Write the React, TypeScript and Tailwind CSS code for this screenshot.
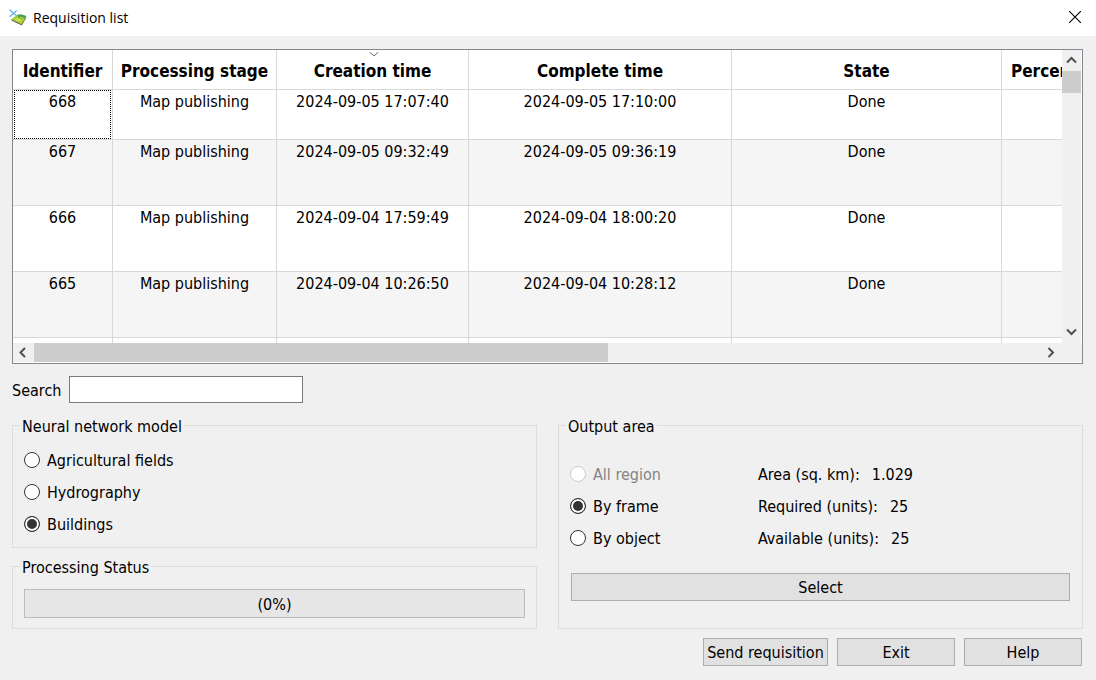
import { useState } from "react";

const columns = [
  { title: "Identifier", width: "w-[100px]" },
  { title: "Processing stage", width: "w-[164px]" },
  { title: "Creation time", width: "w-[192px]", sorted: true },
  { title: "Complete time", width: "w-[263px]" },
  { title: "State", width: "w-[270px]" },
];

const requisitions = [
  { id: "668", stage: "Map publishing", created: "2024-09-05 17:07:40", completed: "2024-09-05 17:10:00", state: "Done" },
  { id: "667", stage: "Map publishing", created: "2024-09-05 09:32:49", completed: "2024-09-05 09:36:19", state: "Done" },
  { id: "666", stage: "Map publishing", created: "2024-09-04 17:59:49", completed: "2024-09-04 18:00:20", state: "Done" },
  { id: "665", stage: "Map publishing", created: "2024-09-04 10:26:50", completed: "2024-09-04 10:28:12", state: "Done" },
];

const models = ["Agricultural fields", "Hydrography", "Buildings"];

const areas = [
  { name: "All region", disabled: true },
  { name: "By frame" },
  { name: "By object" },
];

const info = [
  { label: "Area (sq. km):", value: "1.029" },
  { label: "Required (units):", value: "25" },
  { label: "Available (units):", value: "25" },
];

function AppIcon() {
  return (
    <svg width="18" height="18" viewBox="0 0 18 18" aria-hidden="true">
      <path d="M2.5 10 12.5 14.8 17.2 7.4 17.2 9 12.8 16.6 2.5 11.6z" fill="#6b6a3a" />
      <path d="M2.5 10.2 8.6 5.6 17.2 7 12.6 15.2z" fill="#a4cc2a" />
      <path d="M8.2 5.9 12 5.2 17.2 7 15.8 9.4 12.4 7.6 9.6 8.2z" fill="#3fa05a" />
      <path d="M5 10.4 9 8.4 13 10.2 11.4 13z" fill="#c9e25c" />
      <path d="M8.8 8.4 13 10.2" stroke="#6fa31c" strokeWidth=".8" />
      <path d="M.8 1 3.4 3.4M7.8 1.4 5.4 3.6M1 7.6 3.4 5.2M5.6 5.2 7.6 6.6" stroke="#5aa7e6" strokeWidth="1.1" />
      <path d="M3 3 6.2 5.8M6 3 3 5.8" stroke="#6db4ee" strokeWidth="1.5" />
      <path d="M0 1.6 1.8.2M6.8.8 8.6 2.2M0 6.8 1.8 8.4" stroke="#a8d4f7" strokeWidth="1" />
    </svg>
  );
}

function Chevron({ dir }: { dir: "up" | "down" | "left" | "right" }) {
  const paths = {
    up: "M1 7.5 5.5 3 10 7.5",
    down: "M1 2.5 5.5 7 10 2.5",
    left: "M7 1 2.5 5.5 7 10",
    right: "M2.5 1 7 5.5 2.5 10",
  };
  return (
    <svg width="11" height="11" viewBox="0 0 11 11" fill="none" stroke="#505050" strokeWidth="2" aria-hidden="true">
      <path d={paths[dir]} />
    </svg>
  );
}

function Radio({ name, label, checked, disabled, onChange }: {
  name: string;
  label: string;
  checked: boolean;
  disabled?: boolean;
  onChange: () => void;
}) {
  return (
    <label className={`flex h-8 items-center gap-[7px] ${disabled ? "text-[#848484]" : ""}`}>
      <input
        type="radio"
        name={name}
        checked={checked}
        disabled={disabled}
        onChange={onChange}
        className="size-4 shrink-0 appearance-none rounded-full border border-[#333333] bg-white checked:bg-[#333333] checked:shadow-[inset_0_0_0_2px_#ffffff] disabled:border-[#cccccc]"
      />
      <span className="pt-0.5">{label}</span>
    </label>
  );
}

const buttonClass = "h-7 border border-[#adadad] bg-[#e1e1e1] pt-0.5 text-center leading-5 hover:border-[#0078d7] hover:bg-[#e5f1fb]";
const cellClass = "relative border-r border-b border-[#d8d8d8] p-0 pt-0.5 text-center align-top";
const groupClass = "border border-[#dcdcdc] px-[11px]";
const legendClass = "-ml-1 px-0.5 pt-[3px]";

export default function App() {
  const [search, setSearch] = useState("");
  const [model, setModel] = useState("Buildings");
  const [area, setArea] = useState("By frame");

  return (
    <div className="flex min-h-screen flex-col bg-[#f0f0f0] font-['DejaVu_Sans_Condensed','Noto_Sans',sans-serif] text-[16px] leading-5 text-black">
      <header className="flex h-9 items-center bg-white pl-[9px]">
        <AppIcon />
        <h1 className="ml-1.5 flex-1 font-['Open_Sans',sans-serif] text-[14px]">Requisition list</h1>
        <button type="button" aria-label="Close" className="flex h-[34px] w-[42px] items-center justify-center self-start">
          <svg width="12" height="12" viewBox="0 0 12 12" stroke="#000000" strokeWidth="1.1" aria-hidden="true">
            <path d="M0 0 12 12M12 0 0 12" />
          </svg>
        </button>
      </header>

      <main className="flex flex-col pt-[13px] pr-[13px] pl-3">
        <div className="border border-[#828790] bg-white">
          <div className="flex h-[293px]">
            <div className="min-w-0 flex-1 overflow-hidden">
              <table className="w-[1838px] table-fixed border-separate border-spacing-0">
                <thead>
                  <tr className="h-10 text-[17px]">
                    {columns.map((c) => (
                      <th key={c.title} className={`relative border-r border-b border-[#d8d8d8] p-0 pt-0.5 font-bold ${c.width}`}>
                        {c.sorted && (
                          <svg className="absolute top-0.5 left-1/2 -ml-1" width="10" height="5" viewBox="0 0 10 5" fill="none" stroke="#707070" aria-hidden="true">
                            <path d="M.5 0 5 4 9.5 0" />
                          </svg>
                        )}
                        {c.title}
                      </th>
                    ))}
                    <th className="border-b border-[#d8d8d8] p-0 pt-0.5 pl-[9px] text-left font-bold">Percent</th>
                  </tr>
                </thead>
                <tbody>
                  {requisitions.map((r, i) => (
                    <tr key={r.id} className={`${i === 0 ? "h-[50px]" : "h-[66px]"} ${i % 2 ? "bg-[#f5f5f5]" : "bg-white"}`}>
                      <td className={cellClass}>
                        {i === 0 && <span className="absolute inset-x-px inset-y-0 border border-dotted border-black" />}
                        {r.id}
                      </td>
                      <td className={cellClass}>{r.stage}</td>
                      <td className={cellClass}>{r.created}</td>
                      <td className={cellClass}>{r.completed}</td>
                      <td className={cellClass}>{r.state}</td>
                      <td className="border-b border-[#d8d8d8]"></td>
                    </tr>
                  ))}
                  <tr className="h-[66px]">
                    {columns.map((c) => (
                      <td key={c.title} className={cellClass}></td>
                    ))}
                    <td></td>
                  </tr>
                </tbody>
              </table>
            </div>
            <div className="mr-px flex w-[19px] flex-col bg-[#f0f0f0]">
              <button type="button" aria-label="Scroll up" className="flex h-[21px] items-center justify-center">
                <Chevron dir="up" />
              </button>
              <div className="h-[22px] bg-[#cdcdcd]" />
              <div className="flex-1" />
              <button type="button" aria-label="Scroll down" className="flex h-[21px] items-center justify-center">
                <Chevron dir="down" />
              </button>
            </div>
          </div>
          <div className="mb-px flex h-[19px] bg-[#f0f0f0]">
            <button type="button" aria-label="Scroll left" className="flex w-[21px] items-center justify-center">
              <Chevron dir="left" />
            </button>
            <div className="flex-1">
              <div className="h-full w-[57%] bg-[#cdcdcd]" />
            </div>
            <button type="button" aria-label="Scroll right" className="mr-5 flex w-[21px] items-center justify-center">
              <Chevron dir="right" />
            </button>
          </div>
        </div>

        <div className="mt-3 flex items-center gap-2">
          <label htmlFor="search" className="pt-0.5">Search</label>
          <input
            id="search"
            type="text"
            value={search}
            onChange={(e) => setSearch(e.target.value)}
            className="h-[27px] w-[234px] border border-[#7a7a7a] bg-white px-1 outline-none focus:border-[#0078d7]"
          />
        </div>

        <div className="mt-[11px] grid grid-cols-2 gap-[21px]">
          <div className="flex flex-col gap-[7px]">
            <fieldset className={`pb-[7px] ${groupClass}`}>
              <legend className={legendClass}>Neural network model</legend>
              <div className="pt-[7px]">
                {models.map((m) => (
                  <Radio key={m} name="model" label={m} checked={model === m} onChange={() => setModel(m)} />
                ))}
              </div>
            </fieldset>

            <fieldset className={`pb-2.5 ${groupClass}`}>
              <legend className={legendClass}>Processing Status</legend>
              <div
                role="progressbar"
                aria-label="Processing Status"
                aria-valuenow={0}
                className="mt-[11px] flex h-[29px] items-center justify-center border border-[#bcbcbc] bg-[#e6e6e6] pt-0.5"
              >
                (0%)
              </div>
            </fieldset>
          </div>

          <fieldset className={groupClass}>
            <legend className={legendClass}>Output area</legend>
            <div className="grid grid-cols-[3fr_5fr] pt-[21px]">
              <div>
                {areas.map((a) => (
                  <Radio
                    key={a.name}
                    name="area"
                    label={a.name}
                    disabled={a.disabled}
                    checked={area === a.name}
                    onChange={() => setArea(a.name)}
                  />
                ))}
              </div>
              <div>
                {info.map((row) => (
                  <p key={row.label} className="flex h-8 items-center gap-3 pt-0.5">
                    <span>{row.label}</span>
                    <span>{row.value}</span>
                  </p>
                ))}
              </div>
            </div>
            <div className="mt-[19px] px-px">
              <button type="button" className={`w-full ${buttonClass}`}>Select</button>
            </div>
          </fieldset>
        </div>

        <div className="mt-[9px] flex justify-end gap-[9px] pr-px">
          <button type="button" className={`w-[125px] whitespace-nowrap ${buttonClass}`}>Send requisition</button>
          <button type="button" className={`w-[118px] ${buttonClass}`}>Exit</button>
          <button type="button" className={`w-[118px] ${buttonClass}`}>Help</button>
        </div>
      </main>
    </div>
  );
}
